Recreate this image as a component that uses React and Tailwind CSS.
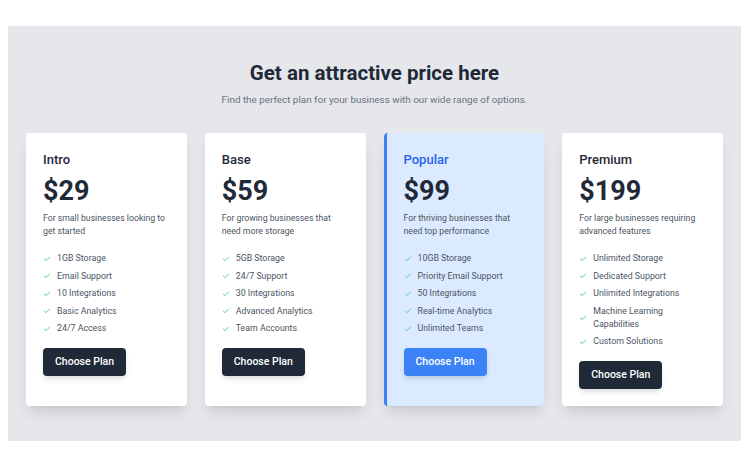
import React from 'react';

const plans = [
  {
    name: 'Intro',
    price: '$29',
    desc: 'For small businesses looking to get started',
    features: ['1GB Storage', 'Email Support', '10 Integrations', 'Basic Analytics', '24/7 Access'],
  },
  {
    name: 'Base',
    price: '$59',
    desc: 'For growing businesses that need more storage',
    features: ['5GB Storage', '24/7 Support', '30 Integrations', 'Advanced Analytics', 'Team Accounts'],
  },
  {
    name: 'Popular',
    price: '$99',
    desc: 'For thriving businesses that need top performance',
    features: ['10GB Storage', 'Priority Email Support', '50 Integrations', 'Real-time Analytics', 'Unlimited Teams'],
    popular: true,
  },
  {
    name: 'Premium',
    price: '$199',
    desc: 'For large businesses requiring advanced features',
    features: ['Unlimited Storage', 'Dedicated Support', 'Unlimited Integrations', 'Machine Learning Capabilities', 'Custom Solutions'],
  },
];

function Check() {
  return (
    <svg width="8" height="8" viewBox="0 0 24 24" fill="none" stroke="#5fc9a0" strokeWidth="3" strokeLinecap="round" strokeLinejoin="round" className="shrink-0">
      <path d="M20 6 9 17l-5-5" />
    </svg>
  );
}

function PlanCard({ plan }) {
  return (
    <div
      className={
        plan.popular
          ? 'bg-[#dbeafe] border-l-[3px] border-[#3b82f6] rounded-[4px] shadow-lg pl-[17px] pr-4 pt-[18px] pb-[17px] flex flex-col items-start'
          : 'bg-white rounded-[4px] shadow-lg px-[17px] pt-[18px] pb-[17px] flex flex-col items-start'
      }
    >
      <h3 className={plan.popular ? 'text-[13px] leading-[18px] font-medium text-[#2563eb]' : 'text-[13px] leading-[18px] font-medium text-[#1f2937]'}>
        {plan.name}
      </h3>
      <div className="mt-[6px] text-[27px] leading-[32px] font-bold text-[#1f2937]">{plan.price}</div>
      <p className="mt-[5px] text-[8.7px] leading-[13px] text-[#4b5563]">{plan.desc}</p>
      <ul className="mt-[14px] flex flex-col gap-[4.5px]">
        {plan.features.map((f) => (
          <li key={f} className="flex items-center gap-[6px] text-[8.8px] leading-[13px] text-[#4b5563]">
            <Check />
            <span>{f}</span>
          </li>
        ))}
      </ul>
      <button
        className={
          plan.popular
            ? 'mt-[13px] h-[28px] px-[12px] rounded-[4px] bg-[#3b82f6] text-white text-[10.5px] font-medium shadow-md'
            : 'mt-[13px] h-[28px] px-[12px] rounded-[4px] bg-[#1f2937] text-white text-[10.5px] font-medium shadow-md'
        }
      >
        Choose Plan
      </button>
    </div>
  );
}

export default function App() {
  return (
    <div className="w-[750px] h-[469px] bg-white pt-[26px] pl-[8px] pr-[9px]" style={{ fontFamily: 'Roboto, "Noto Sans", sans-serif' }}>
      <section className="bg-[#e5e7eb] px-[18px] pt-[34px] pb-[35px]">
        <div className="text-center">
          <h2 className="text-[20.5px] leading-[26px] font-bold text-[#1f2937]">Get an attractive price here</h2>
          <p className="mt-[7px] text-[9.9px] leading-[14px] text-[#6b7280]">
            Find the perfect plan for your business with our wide range of options.
          </p>
        </div>
        <div className="mt-[26px] grid grid-cols-4 gap-[18px]">
          {plans.map((p) => (
            <PlanCard key={p.name} plan={p} />
          ))}
        </div>
      </section>
    </div>
  );
}
